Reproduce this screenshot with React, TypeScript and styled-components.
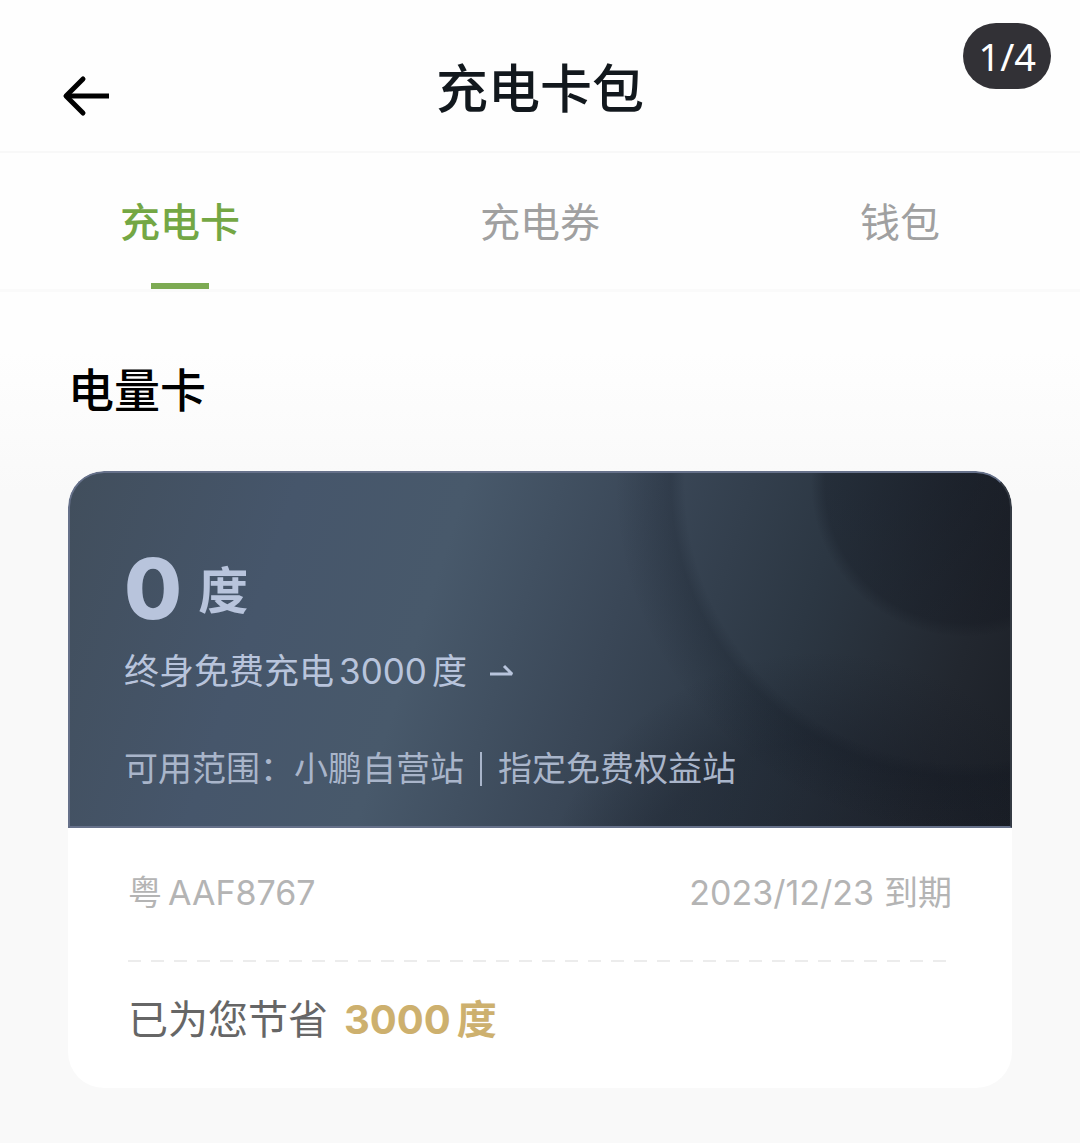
import React, { useState } from "react";
import styled, { createGlobalStyle } from "styled-components";

const GlobalStyle = createGlobalStyle`
  *, *::before, *::after { box-sizing: border-box; }
  body {
    margin: 0;
    background: #f9f9f9;
    font-family: Inter, "Noto Sans CJK SC", sans-serif;
    color: #000;
  }
  h1, h2, p { margin: 0; font-weight: 500; }
  button { font: inherit; border: 0; padding: 0; background: none; cursor: pointer; }
`;

const Page = styled.div`
  position: relative;
  min-height: 100vh;
`;

const Counter = styled.div`
  position: absolute;
  top: 23px;
  right: 29px;
  padding: 0 15px;
  border-radius: 33px;
  background: #323136;
  color: #fff;
  font: 400 38px/66px "Noto Sans", sans-serif;
`;

const Header = styled.header`
  display: grid;
  grid-template-columns: 48px 1fr 48px;
  align-items: center;
  height: 153px;
  padding: 28px 62px 0;
  background: #fefefe;
  border-bottom: 2px solid #f8f8f8;
`;

const BackButton = styled.button`
  display: flex;
  margin-top: 12px;
`;

const Title = styled.h1`
  font-size: 52px;
  line-height: 76px;
  text-align: center;
  color: #12181d;
`;

const Tabs = styled.div`
  display: grid;
  grid-template-columns: repeat(3, 1fr);
  height: 139px;
  background: #fefefe;
  border-bottom: 3px solid #fafafa;
`;

const Tab = styled.button<{ $active: boolean }>`
  display: flex;
  flex-direction: column;
  align-items: center;
  justify-content: space-between;
  padding-top: 40px;
  font-size: 40px;
  line-height: 60px;
  font-weight: ${(p) => (p.$active ? 500 : 400)};
  color: ${(p) => (p.$active ? "#74a744" : "#a0a0a0")};

  &::after {
    content: "";
    width: 58px;
    height: 6px;
    background: ${(p) => (p.$active ? "#7caa52" : "transparent")};
  }
`;

const Section = styled.main`
  padding: 64px 68px 54px;
  background: linear-gradient(#fefefe 60px, #f9f9f9 200px);
`;

const SectionTitle = styled.h2`
  font-size: 46px;
  line-height: 68px;
`;

const Card = styled.article`
  margin-top: 47px;
  border-radius: 36px;
  overflow: hidden;
  background: #fff;
`;

const CardTop = styled.div`
  padding: 72px 54px 32px;
  border: 2px solid #66718a;
  border-right-color: #343a43;
  border-radius: 36px 36px 0 0;
  color: #b8c4dc;
  background:
    radial-gradient(circle at calc(100% - 47px) 12px, rgba(12, 15, 24, 0.36) 0, rgba(12, 15, 24, 0.26) 140px, transparent 154px),
    radial-gradient(circle at calc(100% - 47px) 12px, transparent 280px, rgba(10, 16, 26, 0.18) 294px, transparent 350px),
    radial-gradient(circle at calc(100% - 190px) 470px, rgba(20, 25, 36, 0.3) 200px, transparent 290px),
    linear-gradient(108deg, #414e5c 0%, #46566b 22%, #48596b 38%, #3a4757 56%, #2c3743 74%, #22272f 90%, #1b1f26 100%);
  background-origin: border-box;
`;

const Balance = styled.p`
  display: flex;
  align-items: center;
  gap: 16px;
  line-height: 84px;
`;

const BalanceValue = styled.span`
  font-size: 84px;
  font-weight: 800;
`;

const BalanceUnit = styled.span`
  padding-top: 4px;
  font-size: 50px;
  font-weight: 700;
`;

const Benefit = styled.a`
  display: flex;
  align-items: center;
  width: fit-content;
  margin-top: 12px;
  gap: 5px;
  font-size: 35px;
  line-height: 52px;
  color: inherit;
  text-decoration: none;

  svg { margin-left: 18px; }
`;

const Scope = styled.p`
  display: flex;
  align-items: center;
  margin-top: 47px;
  font-size: 34px;
  line-height: 50px;
  font-weight: 400;
  color: #a9b5ca;
`;

const Divider = styled.span`
  width: 2px;
  height: 34px;
  margin: 0 16px;
  background: currentColor;
`;

const CardBottom = styled.div`
  padding: 40px 60px 38px;
`;

const Meta = styled.div`
  display: flex;
  justify-content: space-between;
  padding-bottom: 42px;
  font-size: 34px;
  line-height: 50px;
  color: #b4b4b4;
`;

const Pair = styled.span<{ $gap: number }>`
  display: flex;
  gap: ${(p) => p.$gap}px;
`;

const DashedRule = styled.div`
  height: 2px;
  background: repeating-linear-gradient(90deg, #ececec 0 13px, transparent 13px 23px);
`;

const Savings = styled.p`
  display: flex;
  gap: 16px;
  margin-top: 28px;
  font-size: 40px;
  line-height: 60px;
  font-weight: 400;
  color: #666;
`;

const Saved = styled.strong`
  display: flex;
  gap: 6px;
  font-weight: 700;
  color: #cdb06e;
`;

const tabs = ["充电卡", "充电券", "钱包"];

export default function App() {
  const [active, setActive] = useState(0);

  return (
    <Page>
      <GlobalStyle />
      <Header>
        <BackButton aria-label="返回">
          <svg width="48" height="42" viewBox="0 0 48 42" fill="none" stroke="#000" strokeWidth="5">
            <path d="M47 21H5" />
            <path d="M21 4L4 21l17 17" strokeLinecap="round" strokeLinejoin="round" />
          </svg>
        </BackButton>
        <Title>充电卡包</Title>
      </Header>
      <Counter>1/4</Counter>
      <Tabs role="tablist">
        {tabs.map((name, i) => (
          <Tab key={name} role="tab" aria-selected={i === active} $active={i === active} onClick={() => setActive(i)}>
            {name}
          </Tab>
        ))}
      </Tabs>
      <Section>
        <SectionTitle>电量卡</SectionTitle>
        <Card>
          <CardTop>
            <Balance>
              <BalanceValue>0</BalanceValue>
              <BalanceUnit>度</BalanceUnit>
            </Balance>
            <Benefit href="#benefit">
              <span>终身免费充电</span>
              <span>3000</span>
              <span>度</span>
              <svg width="24" height="16" viewBox="0 0 24 16" fill="none" stroke="currentColor" strokeWidth="3">
                <path d="M0 11H22L14 3" strokeLinejoin="bevel" />
              </svg>
            </Benefit>
            <Scope>
              可用范围：小鹏自营站
              <Divider />
              指定免费权益站
            </Scope>
          </CardTop>
          <CardBottom>
            <Meta>
              <Pair $gap={6}>
                <span>粤</span>
                <span>AAF8767</span>
              </Pair>
              <Pair $gap={10}>
                <time dateTime="2023-12-23">2023/12/23</time>
                <span>到期</span>
              </Pair>
            </Meta>
            <DashedRule />
            <Savings>
              已为您节省
              <Saved>
                <span>3000</span>
                <span>度</span>
              </Saved>
            </Savings>
          </CardBottom>
        </Card>
      </Section>
    </Page>
  );
}
